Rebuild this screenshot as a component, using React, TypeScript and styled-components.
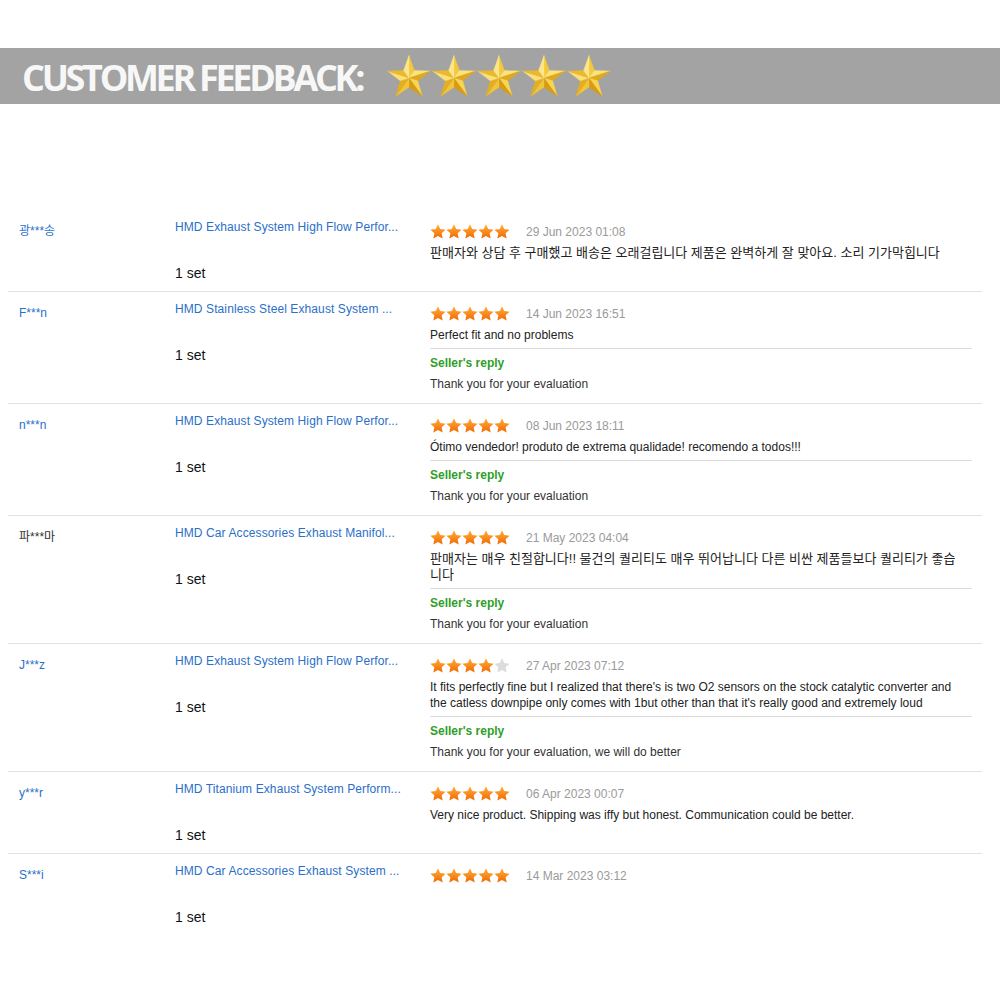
import React from "react";
import styled, { createGlobalStyle } from "styled-components";

const Global = createGlobalStyle`
  html, body { margin: 0; padding: 0; background: #fff; }
  body { font-family: "Liberation Sans", Arial, "Noto Sans CJK KR", sans-serif; }
`;

const Page = styled.div`
  width: 1000px;
  padding-top: 48px;
  padding-bottom: 40px;
`;

const Banner = styled.div`
  height: 56px;
  background: #a3a3a3;
  display: flex;
  align-items: center;
  padding-left: 22px;
  gap: 25px;
`;

const BannerTitle = styled.div`
  font-family: "Open Sans", "Liberation Sans", sans-serif;
  font-weight: 700;
  font-size: 36px;
  letter-spacing: -3.3px;
  color: #f7f7f7;
  line-height: 1;
  padding-top: 3px;
`;

const BigStars = styled.div`
  display: flex;
  gap: 1px;
  padding-top: 2px;
`;

const Table = styled.div`
  margin: 106px 0 0 8px;
  width: 974px;
`;

const Row = styled.div<{ $last?: boolean }>`
  display: grid;
  grid-template-columns: 167px 255px 1fr;
  border-bottom: ${(p) => (p.$last ? "none" : "1px solid #e3e3e3")};
  padding: 9px 10px 10px 0;
`;

const UserCell = styled.div<{ $dark?: boolean }>`
  padding-left: 11px;
  padding-top: 4px;
  font-size: 12px;
  line-height: 16px;
  color: ${(p) => (p.$dark ? "#333" : "#2a6fc8")};
  font-family: "Liberation Sans", "Noto Sans CJK KR", sans-serif;
`;

const ProductCell = styled.div`
  display: flex;
  flex-direction: column;
`;

const ProductTitle = styled.div`
  font-size: 12px;
  line-height: 16px;
  letter-spacing: 0.1px;
  color: #2a6fc8;
  white-space: nowrap;
`;

const Qty = styled.div`
  margin-top: 30px;
  font-size: 14px;
  line-height: 16px;
  color: #111;
`;

const ReviewCell = styled.div`
  padding-top: 4px;
  display: flex;
  flex-direction: column;
`;

const StarLine = styled.div`
  display: flex;
  align-items: center;
  height: 16px;
  gap: 16px;
`;

const SmallStars = styled.div`
  display: flex;
`;

const DateText = styled.span`
  font-size: 12px;
  color: #9a9a9a;
  padding-top: 2px;
`;

const ReviewText = styled.div<{ $ko?: boolean }>`
  margin-top: 6px;
  padding-right: 10px;
  font-size: ${(p) => (p.$ko ? "13px" : "12px")};
  line-height: 16px;
  color: #222;
  font-family: "Liberation Sans", "Noto Sans CJK KR", sans-serif;
`;

const Divider = styled.div`
  margin-top: 5px;
  height: 1px;
  background: #dcdcdc;
`;

const ReplyLabel = styled.div`
  margin-top: 6px;
  font-size: 12px;
  line-height: 16px;
  font-weight: 700;
  color: #2f9e2a;
`;

const ReplyText = styled.div`
  margin-top: 5px;
  margin-bottom: 1px;
  font-size: 12px;
  line-height: 16px;
  color: #333;
`;

const SmallStar = ({ filled }: { filled: boolean }) => (
  <svg width="16" height="15" viewBox="0 0 16 15">
    <defs>
      <linearGradient id="og" x1="0" y1="0" x2="0" y2="1">
        <stop offset="0" stopColor="#ffb347" />
        <stop offset="0.55" stopColor="#fa8718" />
        <stop offset="1" stopColor="#ef6a02" />
      </linearGradient>
    </defs>
    <polygon
      points="8,0.3 10.23,5.1 15.6,5.63 11.61,9.27 12.7,14.6 8,11.9 3.3,14.6 4.39,9.27 0.4,5.63 5.77,5.1"
      fill={filled ? "url(#og)" : "#dcdcdc"}
    />
  </svg>
);

const BigStar = () => {
  const cx = 22;
  const cy = 24;
  const R = 22.5;
  const r = 9.2;
  const pts: [number, number][] = [];
  for (let i = 0; i < 10; i++) {
    const a = (-90 + i * 36) * (Math.PI / 180);
    const rad = i % 2 === 0 ? R : r;
    pts.push([cx + rad * Math.cos(a), cy + rad * Math.sin(a)]);
  }
  const colors = [
    "#f3c93a", "#fbe27a", "#e0a91c", "#f7d552", "#d99b12",
    "#f1c53a", "#e4ae22", "#fbe07a", "#eab92c", "#fce58a",
  ];
  return (
    <svg width="44" height="46" viewBox="0 0 44 46">
      {pts.map((p, i) => {
        const q = pts[(i + 1) % 10];
        return (
          <polygon
            key={i}
            points={`${cx},${cy} ${p[0]},${p[1]} ${q[0]},${q[1]}`}
            fill={colors[i]}
            stroke={colors[i]}
            strokeWidth="0.4"
          />
        );
      })}
    </svg>
  );
};

type Review = {
  user: string;
  dark?: boolean;
  product: string;
  stars: number;
  date: string;
  text?: string;
  ko?: boolean;
  reply?: string;
};

const reviews: Review[] = [
  {
    user: "광***송",
    product: "HMD Exhaust System High Flow Perfor...",
    stars: 5,
    date: "29 Jun 2023 01:08",
    text: "판매자와 상담 후 구매했고 배송은 오래걸립니다 제품은 완벽하게 잘 맞아요. 소리 기가막힙니다",
    ko: true,
  },
  {
    user: "F***n",
    product: "HMD Stainless Steel Exhaust System ...",
    stars: 5,
    date: "14 Jun 2023 16:51",
    text: "Perfect fit and no problems",
    reply: "Thank you for your evaluation",
  },
  {
    user: "n***n",
    product: "HMD Exhaust System High Flow Perfor...",
    stars: 5,
    date: "08 Jun 2023 18:11",
    text: "Ótimo vendedor! produto de extrema qualidade! recomendo a todos!!!",
    reply: "Thank you for your evaluation",
  },
  {
    user: "파***마",
    dark: true,
    product: "HMD Car Accessories Exhaust Manifol...",
    stars: 5,
    date: "21 May 2023 04:04",
    text: "판매자는 매우 친절합니다!! 물건의 퀄리티도 매우 뛰어납니다 다른 비싼 제품들보다 퀄리티가 좋습니다",
    ko: true,
    reply: "Thank you for your evaluation",
  },
  {
    user: "J***z",
    product: "HMD Exhaust System High Flow Perfor...",
    stars: 4,
    date: "27 Apr 2023 07:12",
    text: "It fits perfectly fine but I realized that there's is two O2 sensors on the stock catalytic converter and the catless downpipe only comes with 1but other than that it's really good and extremely loud",
    reply: "Thank you for your evaluation, we will do better",
  },
  {
    user: "y***r",
    product: "HMD Titanium Exhaust System Perform...",
    stars: 5,
    date: "06 Apr 2023 00:07",
    text: "Very nice product. Shipping was iffy but honest. Communication could be better.",
  },
  {
    user: "S***i",
    product: "HMD Car Accessories Exhaust System ...",
    stars: 5,
    date: "14 Mar 2023 03:12",
  },
];

export default function App() {
  return (
    <>
      <Global />
      <Page>
        <Banner>
          <BannerTitle>CUSTOMER FEEDBACK:</BannerTitle>
          <BigStars>
            {[0, 1, 2, 3, 4].map((i) => (
              <BigStar key={i} />
            ))}
          </BigStars>
        </Banner>
        <Table>
          {reviews.map((r, i) => (
            <Row key={i} $last={i === reviews.length - 1}>
              <UserCell $dark={r.dark}>{r.user}</UserCell>
              <ProductCell>
                <ProductTitle>{r.product}</ProductTitle>
                <Qty>1 set</Qty>
              </ProductCell>
              <ReviewCell>
                <StarLine>
                  <SmallStars>
                    {[0, 1, 2, 3, 4].map((s) => (
                      <SmallStar key={s} filled={s < r.stars} />
                    ))}
                  </SmallStars>
                  <DateText>{r.date}</DateText>
                </StarLine>
                {r.text && <ReviewText $ko={r.ko}>{r.text}</ReviewText>}
                {r.reply && (
                  <>
                    <Divider />
                    <ReplyLabel>Seller's reply</ReplyLabel>
                    <ReplyText>{r.reply}</ReplyText>
                  </>
                )}
              </ReviewCell>
            </Row>
          ))}
        </Table>
      </Page>
    </>
  );
}
